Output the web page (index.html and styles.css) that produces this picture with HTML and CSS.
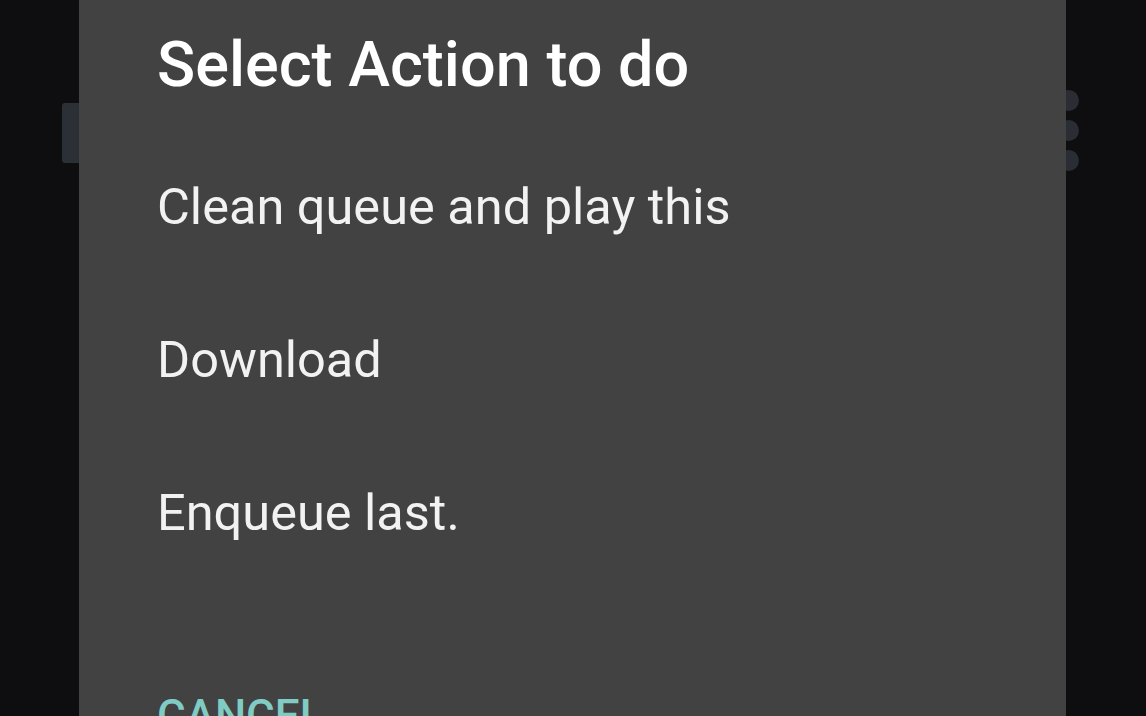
FILE: index.html
```html
<!DOCTYPE html>
<html lang="en">
<head>
  <meta charset="UTF-8">
  <meta name="viewport" content="width=device-width, initial-scale=1.0">
  <title>Select Action to do</title>
  <link rel="stylesheet" href="styles.css">
</head>
<body>
  <!-- tela por baixo do dialogo -->
  <div class="behind-tab"></div>
  <div class="behind-menu">
    <span class="dot"></span>
    <span class="dot"></span>
    <span class="dot"></span>
  </div>

  <div class="dialog">
    <h1 class="dialog-title">Select Action to do</h1>
    <ul class="action-list">
      <li class="action">Clean queue and play this</li>
      <li class="action">Download</li>
      <li class="action">Enqueue last.</li>
    </ul>
    <div class="dialog-buttons">
      <button class="btn-cancel">CANCEL</button>
    </div>
  </div>
</body>
</html>
```

FILE: styles.css
```css
html, body {
  margin: 0;
  height: 100%;
}
body {
  background: #0e0e10;
  font-family: Roboto, "Noto Sans", sans-serif;
  color: white;
  overflow: hidden;
  position: relative;
}
.behind-tab {
  position: absolute;
  left: 62px;
  top: 103px;
  width: 20px;
  height: 60px;
  background: #2b2f36;
  border-radius: 3px;
}
.behind-menu {
  position: absolute;
  left: 1058px;
  top: 90px;
  display: flex;
  flex-direction: column;
  gap: 9px;
}
.dot {
  width: 21px;
  height: 21px;
  border-radius: 50%;
  background: #2a2d33;
}
.dialog {
  position: relative;
  margin-left: 79px;
  width: 987px;
  height: 716px;
  overflow: hidden;
  background: #424242;
  padding: 27px 0 0 78px;
  box-sizing: border-box;
}
.dialog-title {
  margin: 0;
  font-size: 63px;
  font-weight: 500;
  line-height: 75px;
  color: #ffffff;
}
.action-list {
  list-style: none;
  margin: 28px 0 0;
  padding: 0;
}
.action {
  font-size: 50.5px;
  line-height: 153px;
  color: #f2f2f2;
}
.dialog-buttons {
  margin-top: 101px;
}
.btn-cancel {
  background: none;
  border: none;
  padding: 0;
  font-family: Roboto, sans-serif;
  font-size: 44px;
  font-weight: 500;
  color: #80cbc4;
}
```
